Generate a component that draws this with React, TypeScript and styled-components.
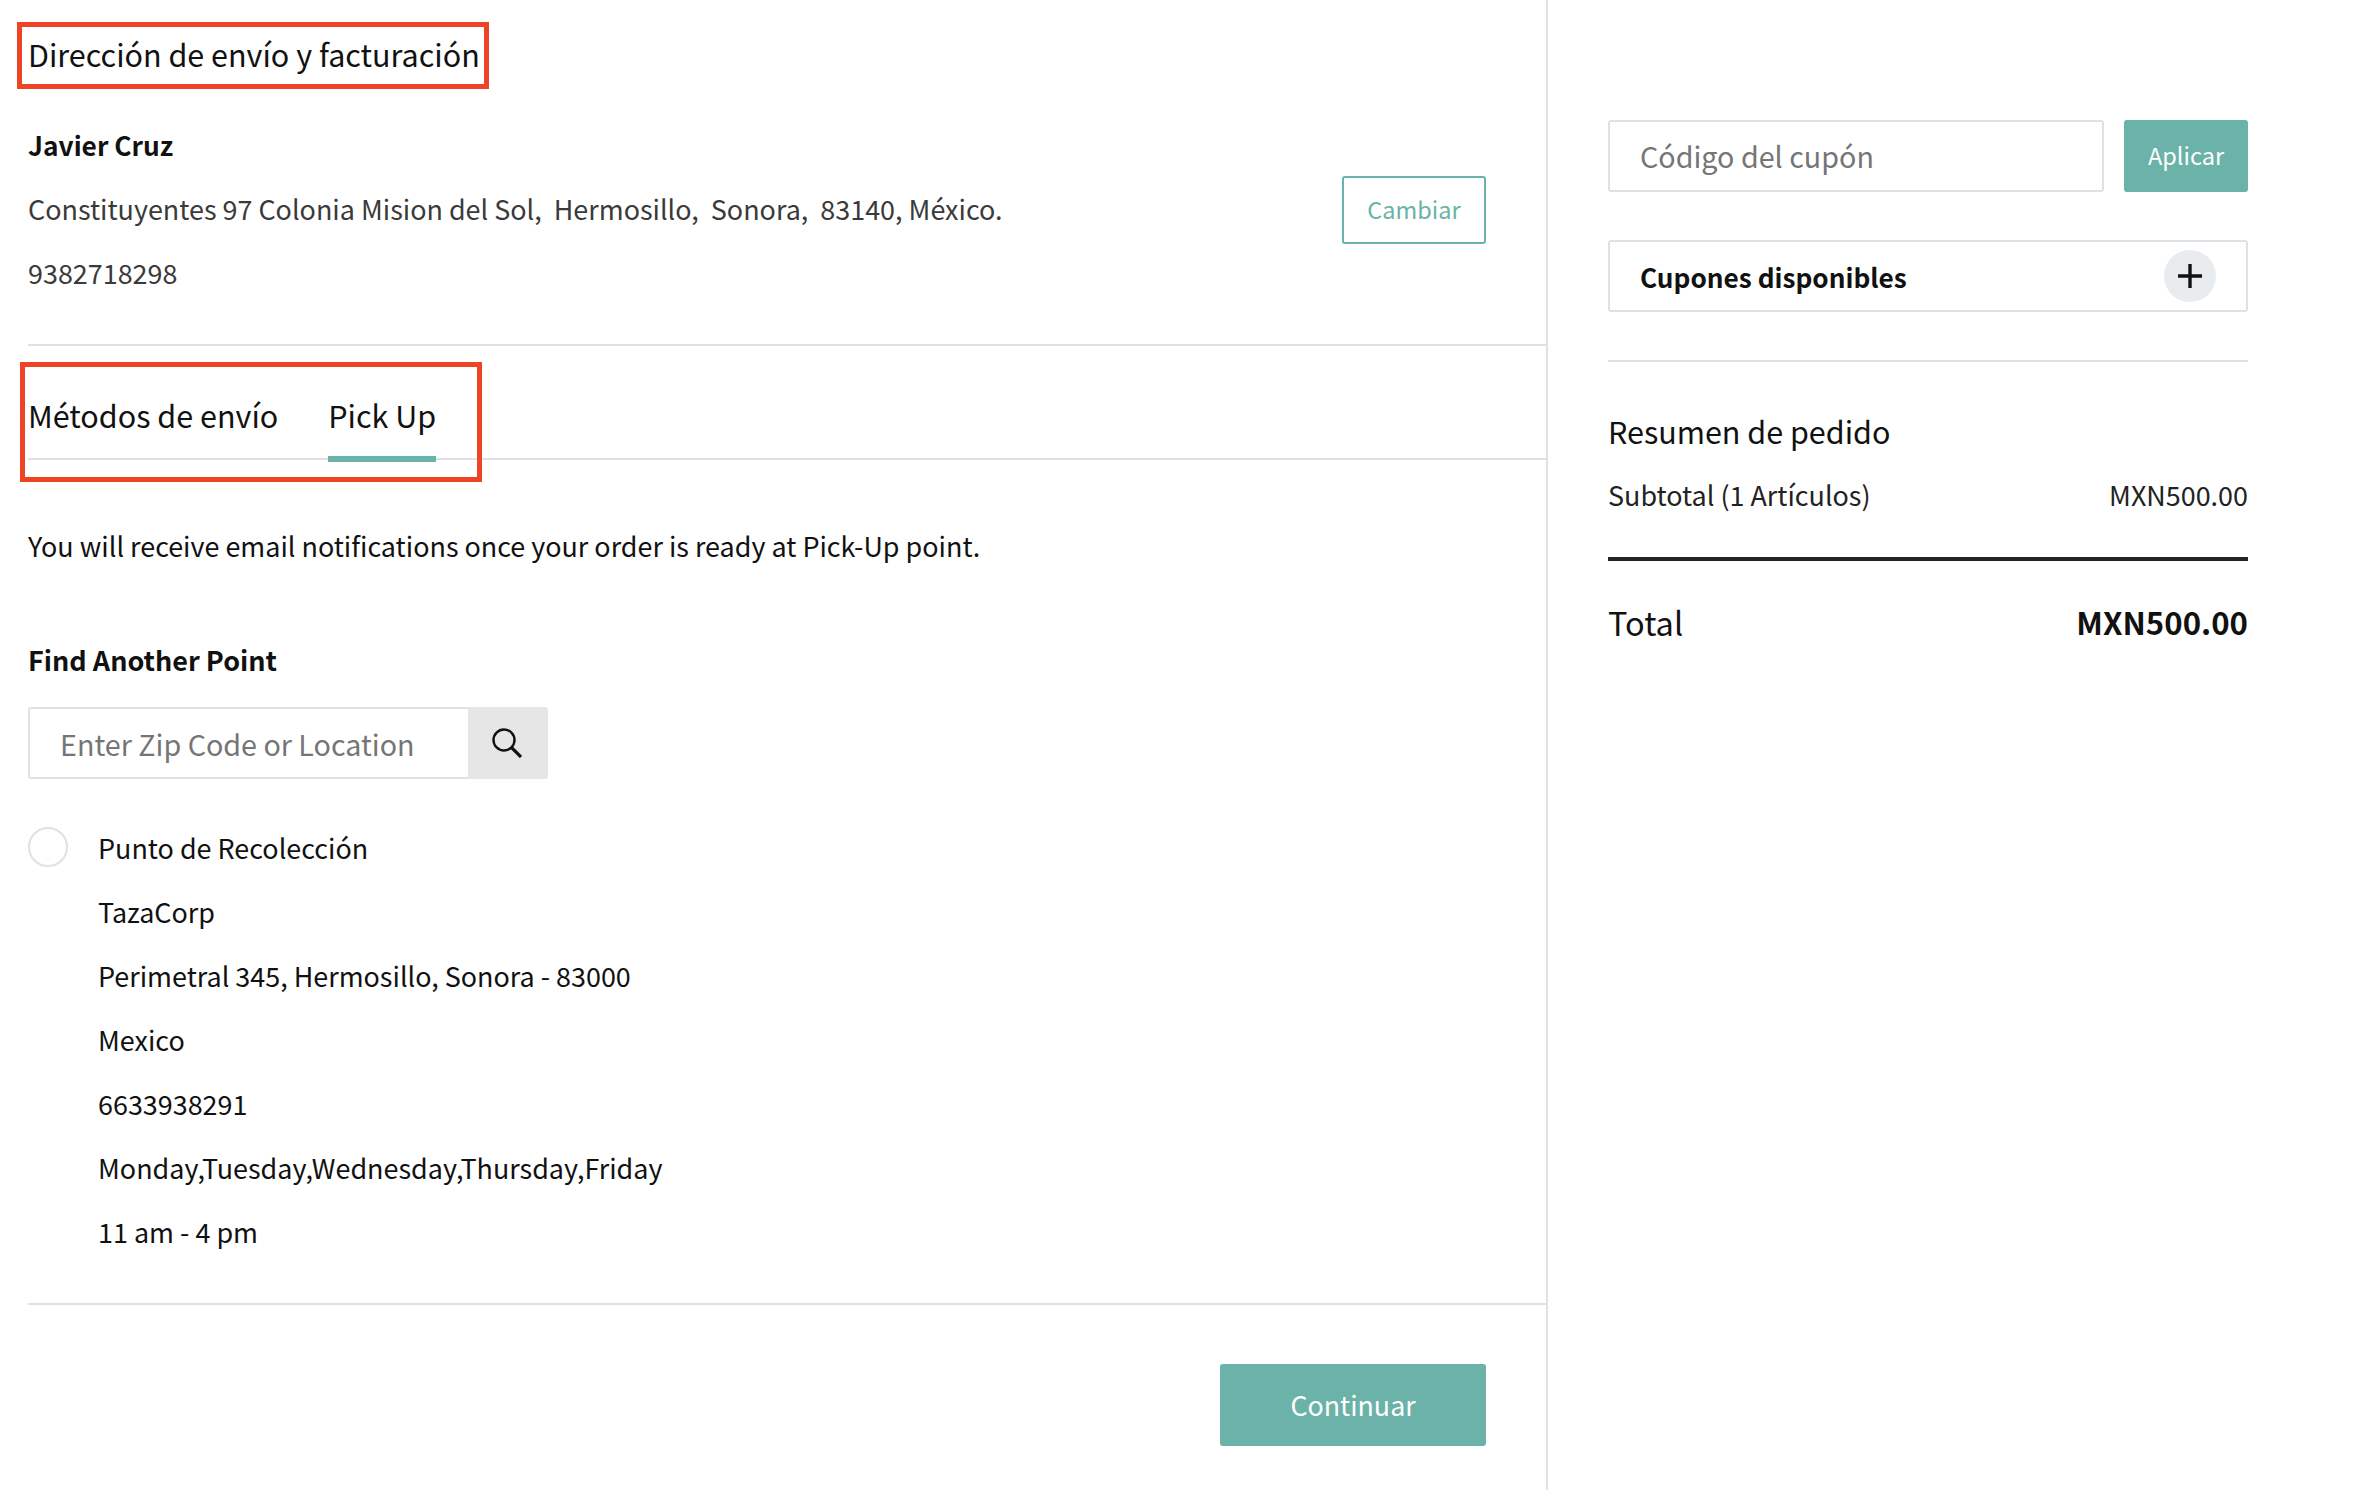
import React from "react";
import styled, { createGlobalStyle } from "styled-components";

const Global = createGlobalStyle`
  html, body { margin: 0; padding: 0; background: #fff; }
  body { font-family: "Noto Sans CJK JP", "Noto Sans", sans-serif; color: #212529; }
  * { box-sizing: border-box; }
  input::placeholder { color: #757575; opacity: 1; }
`;

const Page = styled.div`
  display: grid;
  grid-template-columns: 1548px 1fr;
  width: 2354px;
  height: 1490px;
  overflow: hidden;
`;
const Main = styled.main`
  border-right: 2px solid #dee2e6;
  padding-left: 28px;
  position: relative;
`;
const Side = styled.aside`
  padding: 120px 106px 0 60px;
`;
const Title = styled.h2`
  margin: 0;
  padding-top: 29px;
  height: 113px;
  font-size: 30.5px;
  line-height: 50px;
  font-weight: 400;
  color: #111;
`;
const Annotation = styled.div<{ $w: number; $h: number; $l: number; $t: number }>`
  position: absolute;
  left: ${(p) => p.$l}px;
  top: ${(p) => p.$t}px;
  width: ${(p) => p.$w}px;
  height: ${(p) => p.$h}px;
  border: 5px solid #ee4426;
  pointer-events: none;
`;
const AddressRow = styled.div`
  display: flex;
  justify-content: space-between;
  align-items: center;
  padding-right: 60px;
`;
const Line = styled.p<{ $bold?: boolean; $dark?: boolean }>`
  margin: 0;
  font-size: ${(p) => (p.$bold ? 26.3 : 26.93)}px;
  line-height: 64px;
  white-space: pre;
  font-weight: ${(p) => (p.$bold ? 700 : 400)};
  color: ${(p) => (p.$bold || p.$dark ? "#111" : "#3a3a3a")};
`;
const OutlineButton = styled.button`
  width: 144px;
  height: 68px;
  margin-top: 2px;
  background: #fff;
  border: 2px solid #6bb2a8;
  border-radius: 3px;
  color: #6bb2a8;
  font: inherit;
  font-size: 23.5px;
  padding: 0 0 3px;
`;
const Rule = styled.hr<{ $mt?: number }>`
  height: 2px;
  margin: ${(p) => p.$mt ?? 0}px 0 0;
  border: 0;
  background: #dee2e6;
`;
const Tabs = styled.div`
  display: flex;
  gap: 50px;
  height: 114px;
  padding-top: 44px;
  border-bottom: 2px solid #dee2e6;
`;
const Tab = styled.div<{ $active?: boolean }>`
  font-size: 30.5px;
  line-height: 50px;
  height: 72px;
  color: #111;
  border-bottom: ${(p) => (p.$active ? "6px solid #6bb2a8" : "0")};
`;
const Notice = styled(Line)`
  margin-top: 54px;
  color: #111;
`;
const FindLabel = styled(Line)`
  margin-top: 50px;
  font-size: 27px;
`;
const SearchBar = styled.div`
  display: flex;
  width: 520px;
  height: 72px;
  margin-top: 15px;
`;
const SearchInput = styled.input`
  flex: 1;
  min-width: 0;
  height: 100%;
  border: 2px solid #dee2e6;
  border-right: 0;
  border-radius: 3px 0 0 3px;
  padding: 0 30px;
  font: inherit;
  font-size: 28.7px;
  outline: none;
`;
const SearchButton = styled.button`
  width: 80px;
  height: 100%;
  display: flex;
  align-items: center;
  justify-content: center;
  background: #e6e6e6;
  border: 0;
  border-radius: 0 3px 3px 0;
  padding: 0 2px 0 0;
  color: #111;
`;
const PointRow = styled.div`
  display: flex;
  gap: 30px;
  margin-top: 37px;
`;
const Radio = styled.span`
  flex: none;
  width: 40px;
  height: 40px;
  margin-top: 11px;
  border: 2px solid #dee2e6;
  border-radius: 50%;
`;
const Footer = styled.div`
  display: flex;
  justify-content: flex-end;
  padding: 59px 60px 0 0;
`;
const PrimaryButton = styled.button`
  width: 266px;
  height: 82px;
  background: #6bb2a8;
  border: 0;
  border-radius: 3px;
  color: #fff;
  font: inherit;
  font-size: 26.8px;
  padding: 0 0 2px;
`;
const CouponRow = styled.div`
  display: flex;
  gap: 20px;
  height: 72px;
`;
const CouponInput = styled.input`
  flex: 1;
  min-width: 0;
  border: 2px solid #dee2e6;
  border-radius: 3px;
  padding: 0 30px 1px;
  font: inherit;
  font-size: 28.7px;
  outline: none;
`;
const ApplyButton = styled.button`
  width: 124px;
  background: #6bb2a8;
  border: 0;
  border-radius: 3px;
  color: #fff;
  font: inherit;
  font-size: 23.5px;
  padding: 0 0 3px;
`;
const CouponBox = styled.div`
  display: flex;
  align-items: center;
  justify-content: space-between;
  height: 72px;
  margin-top: 48px;
  padding: 0 30px;
  border: 2px solid #dee2e6;
  border-radius: 3px;
`;
const CouponLabel = styled.span`
  padding-top: 2px;
  font-size: 26.2px;
  font-weight: 700;
  color: #111;
`;
const PlusCircle = styled.span`
  width: 52px;
  height: 52px;
  border-radius: 50%;
  background: #e9ecef;
  display: flex;
  align-items: center;
  justify-content: center;
  color: #111;
`;
const SummaryTitle = styled.h3`
  margin: 44px 0 0;
  font-size: 30.5px;
  line-height: 50px;
  font-weight: 400;
  color: #111;
`;
const SummaryRow = styled.div`
  display: flex;
  justify-content: space-between;
  font-size: 26.93px;
  line-height: 64px;
  color: #222;
  margin-top: 7px;
`;
const TotalRule = styled.hr`
  height: 4px;
  margin: 30px 0 0;
  border: 0;
  background: #212529;
`;
const TotalRow = styled.div`
  display: flex;
  justify-content: space-between;
  align-items: center;
  height: 64px;
  margin-top: 28px;
  font-size: 32.5px;
  color: #111;
`;
const TotalValue = styled.strong`
  font-size: 31.2px;
  font-weight: 700;
  color: #111;
`;

const pointLines = [
  "TazaCorp",
  "Perimetral 345, Hermosillo, Sonora - 83000",
  "Mexico",
  "6633938291",
  "Monday,Tuesday,Wednesday,Thursday,Friday",
  "11 am - 4 pm",
];

export default function App() {
  return (
    <Page>
      <Global />
      <Main>
        <Annotation $l={17} $t={22} $w={472} $h={67} />
        <Annotation $l={20} $t={362} $w={462} $h={120} />
        <Title>Dirección de envío y facturación</Title>
        <AddressRow>
          <div>
            <Line $bold>Javier Cruz</Line>
            <Line>{"Constituyentes 97 Colonia Mision del Sol,  Hermosillo,  Sonora,  83140, México."}</Line>
            <Line>9382718298</Line>
          </div>
          <OutlineButton>Cambiar</OutlineButton>
        </AddressRow>
        <Rule $mt={39} />
        <Tabs>
          <Tab>Métodos de envío</Tab>
          <Tab $active>Pick Up</Tab>
        </Tabs>
        <Notice>You will receive email notifications once your order is ready at Pick-Up point.</Notice>
        <FindLabel $bold>Find Another Point</FindLabel>
        <SearchBar>
          <SearchInput placeholder="Enter Zip Code or Location" />
          <SearchButton aria-label="Buscar">
            <svg width="30" height="30" viewBox="0 0 30 30" fill="none" stroke="currentColor" aria-hidden="true">
              <circle cx="12" cy="12" r="10.5" strokeWidth="2.4" />
              <path d="M19.6 19.6 29 29" strokeWidth="3.2" />
            </svg>
          </SearchButton>
        </SearchBar>
        <PointRow>
          <Radio />
          <div>
            <Line $dark>Punto de Recolección</Line>
            {pointLines.map((t) => (
              <Line $dark key={t}>{t}</Line>
            ))}
          </div>
        </PointRow>
        <Rule $mt={39} />
        <Footer>
          <PrimaryButton>Continuar</PrimaryButton>
        </Footer>
      </Main>
      <Side>
        <CouponRow>
          <CouponInput placeholder="Código del cupón" />
          <ApplyButton>Aplicar</ApplyButton>
        </CouponRow>
        <CouponBox>
          <CouponLabel>Cupones disponibles</CouponLabel>
          <PlusCircle>
            <svg width="26" height="26" viewBox="0 0 26 26" aria-hidden="true">
              <path d="M13 1v24M1 13h24" stroke="currentColor" strokeWidth="3.4" fill="none" />
            </svg>
          </PlusCircle>
        </CouponBox>
        <Rule $mt={48} />
        <SummaryTitle>Resumen de pedido</SummaryTitle>
        <SummaryRow>
          <span>Subtotal (1 Artículos)</span>
          <span>MXN500.00</span>
        </SummaryRow>
        <TotalRule />
        <TotalRow>
          <span>Total</span>
          <TotalValue>MXN500.00</TotalValue>
        </TotalRow>
      </Side>
    </Page>
  );
}
